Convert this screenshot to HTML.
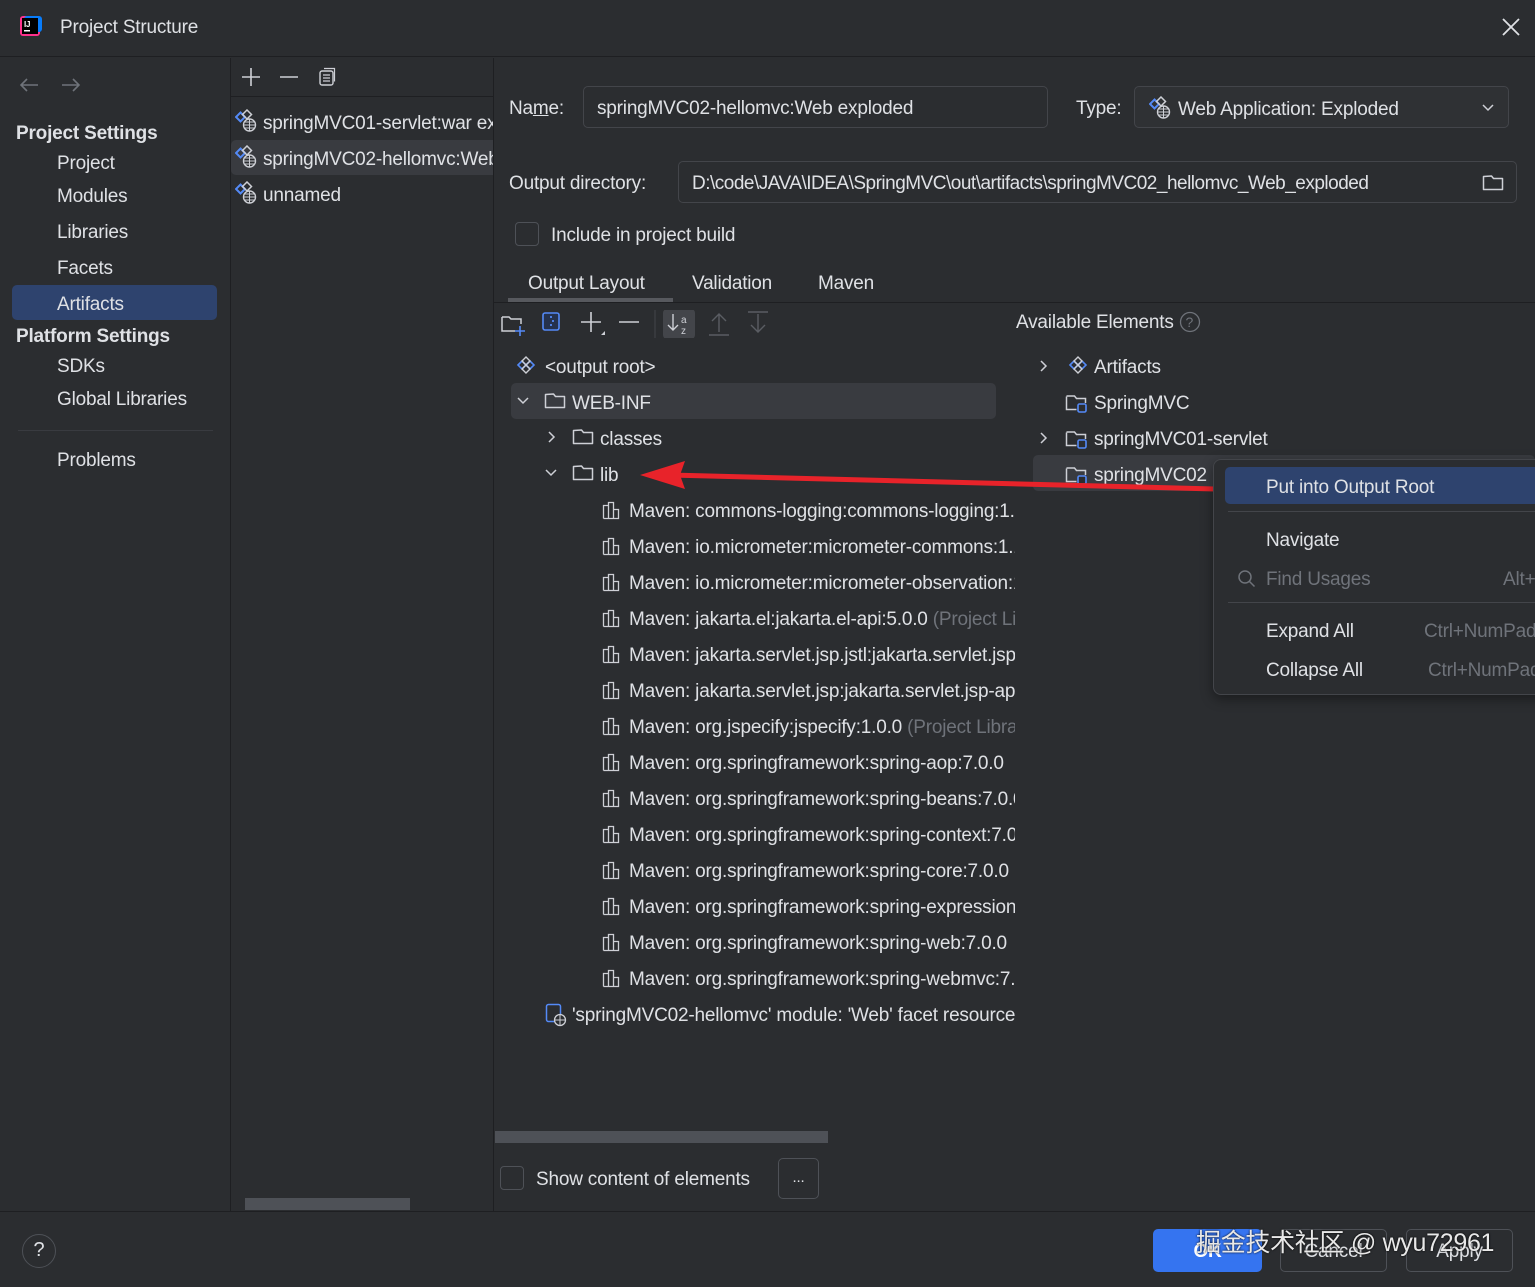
<!DOCTYPE html>
<html><head><meta charset="utf-8">
<style>
*{box-sizing:border-box;margin:0;padding:0}
body{width:1535px;height:1287px;background:#2b2d30;color:#dfe1e5;font-family:"Liberation Sans","Noto Sans CJK SC",sans-serif;font-size:19px;position:relative;overflow:hidden;letter-spacing:-0.2px}
.a{position:absolute;white-space:nowrap}
.t{line-height:36px;height:36px;margin-top:2px}
.sel{background:#2e436e}
.g{color:#6f737a}
.clip{overflow:hidden}
svg{position:absolute}
</style></head><body>
<svg width="0" height="0" style="position:absolute">
<defs>
<g id="art"><path d="M5.5 3.5l4.5 4.5-4.5 4.5L1 8z" fill="none" stroke="#548af7" stroke-width="2"/><path d="M12 1l4.5 4.5-4.5 4.5-4.5-4.5z" fill="none" stroke="#ced0d6" stroke-width="1.5"/><circle cx="14.5" cy="16" r="6" fill="#2b2d30" stroke="#ced0d6" stroke-width="1.4"/><path d="M8.5 16h12M14.5 10v12M10 13h9M10 19h9" stroke="#ced0d6" stroke-width="1"/></g>
<g id="root"><path d="M5 10l4-4 4 4-4 4z" fill="none" stroke="#548af7" stroke-width="1.6"/><path d="M13 10l4-4 4 4-4 4z" fill="none" stroke="#548af7" stroke-width="1.6"/><path d="M9 6l4-4 4 4-4 4z" fill="none" stroke="#ced0d6" stroke-width="1.4"/><path d="M9 14l4-4 4 4-4 4z" fill="none" stroke="#ced0d6" stroke-width="1.4"/></g>
<g id="fold"><path d="M1.5 4.5v13h19v-11h-9l-2-2.5z" fill="none" stroke="#ced0d6" stroke-width="1.5" stroke-linejoin="round"/></g>
<g id="mfold"><path d="M1.5 4.5v13h10M20.5 11v-4.5h-9l-2-2.5h-8" fill="none" stroke="#ced0d6" stroke-width="1.5"/><rect x="13" y="12" width="8" height="8" rx="1.5" fill="#2b2d30" stroke="#548af7" stroke-width="1.6"/></g>
<g id="lib"><path d="M1.5 18.5v-13h5v13M6.5 18.5v-16h5v16M11.5 18.5v-9h5v9h-15" fill="none" stroke="#ced0d6" stroke-width="1.3"/></g>
<g id="chd"><path d="M1 1l5 5 5-5" fill="none" stroke="#ced0d6" stroke-width="1.5"/></g>
<g id="chr"><path d="M1 1l5 5-5 5" fill="none" stroke="#ced0d6" stroke-width="1.5"/></g>
</defs></svg>

<!-- title bar -->
<div class="a" style="left:0;top:0;width:1535px;height:57px;border-bottom:1px solid #1e1f22"></div>
<svg style="left:18px;top:15px" width="24" height="24"><rect x="2" y="1" width="20" height="20" rx="3" fill="#ff318c"/><rect x="6" y="1" width="18" height="16" rx="3" fill="#087cfa"/><rect x="4" y="3" width="16" height="16" fill="#000"/><text x="6" y="12" font-size="8" fill="#fff" font-family="Liberation Sans" font-weight="bold">IJ</text><rect x="6" y="15" width="6" height="1.5" fill="#fff"/></svg>
<div class="a" style="left:60px;top:15px;font-size:19px;line-height:26px">Project Structure</div>
<svg style="left:1501px;top:17px" width="20" height="20"><path d="M2 2l16 16M18 2L2 18" stroke="#dfe1e5" stroke-width="1.8"/></svg>

<!-- left sidebar -->
<div class="a" style="left:230px;top:58px;width:1px;height:1154px;background:#1e1f22"></div>
<svg style="left:20px;top:76px" width="70" height="18"><path d="M1 9h17M7 3L1 9l6 6" fill="none" stroke="#6f737a" stroke-width="1.6"/><path d="M42 9h17M53 3l6 6-6 6" fill="none" stroke="#6f737a" stroke-width="1.6"/></svg>
<div class="a t" style="left:16px;top:114px;font-weight:bold">Project Settings</div>
<div class="a t" style="left:57px;top:144px">Project</div>
<div class="a t" style="left:57px;top:177px">Modules</div>
<div class="a t" style="left:57px;top:213px">Libraries</div>
<div class="a t" style="left:57px;top:249px">Facets</div>
<div class="a sel" style="left:12px;top:285px;width:205px;height:35px;border-radius:5px"></div>
<div class="a t" style="left:57px;top:285px">Artifacts</div>
<div class="a t" style="left:16px;top:317px;font-weight:bold">Platform Settings</div>
<div class="a t" style="left:57px;top:347px">SDKs</div>
<div class="a t" style="left:57px;top:380px">Global Libraries</div>
<div class="a" style="left:18px;top:430px;width:195px;height:1px;background:#393b40"></div>
<div class="a t" style="left:57px;top:441px">Problems</div>

<!-- artifacts list -->
<div class="a" style="left:493px;top:58px;width:1px;height:1154px;background:#1e1f22"></div>
<div class="a" style="left:231px;top:96px;width:262px;height:1px;background:#1e1f22"></div>
<svg style="left:240px;top:67px" width="110" height="22"><path d="M2 10h18M11 1v18" stroke="#ced0d6" stroke-width="1.6"/><path d="M40 10h18" stroke="#ced0d6" stroke-width="1.6"/><rect x="80" y="4" width="13" height="14" rx="2" fill="none" stroke="#ced0d6" stroke-width="1.4"/><path d="M84 1.5h10.5v13M83 8h7M83 11h7M83 14h7" fill="none" stroke="#ced0d6" stroke-width="1.2"/></svg>
<div class="a" style="left:231px;top:140px;width:262px;height:35px;background:#393b40;border-radius:5px 0 0 5px"></div>
<svg style="left:235px;top:109px" width="24" height="24"><use href="#art"/></svg>
<svg style="left:235px;top:145px" width="24" height="24"><use href="#art"/></svg>
<svg style="left:235px;top:181px" width="24" height="24"><use href="#art"/></svg>
<div class="a t clip" style="left:263px;top:104px;width:230px">springMVC01-servlet:war exploded</div>
<div class="a t clip" style="left:263px;top:140px;width:230px">springMVC02-hellomvc:Web exploded</div>
<div class="a t" style="left:263px;top:176px">unnamed</div>
<div class="a" style="left:245px;top:1198px;width:165px;height:12px;background:#4e5157"></div>

<!-- right top form -->
<div class="a t" style="left:509px;top:89px">Na<u>m</u>e:</div>
<div class="a" style="left:583px;top:86px;width:465px;height:42px;border:1px solid #43454a;border-radius:5px"></div>
<div class="a t" style="left:597px;top:89px">springMVC02-hellomvc:Web exploded</div>
<div class="a t" style="left:1076px;top:89px">Type:</div>
<div class="a" style="left:1134px;top:86px;width:375px;height:42px;border:1px solid #43454a;border-radius:5px;background:#2f3134"></div>
<svg style="left:1149px;top:96px" width="24" height="24"><use href="#art"/></svg>
<div class="a t" style="left:1178px;top:90px">Web Application: Exploded</div>
<svg style="left:1482px;top:104px" width="14" height="10"><use href="#chd"/></svg>
<div class="a t" style="left:509px;top:164px">Output directory:</div>
<div class="a" style="left:678px;top:161px;width:839px;height:42px;border:1px solid #43454a;border-radius:5px"></div>
<div class="a t" style="left:692px;top:164px;letter-spacing:-0.5px">D:\code\JAVA\IDEA\SpringMVC\out\artifacts\springMVC02_hellomvc_Web_exploded</div>
<svg style="left:1482px;top:172px" width="24" height="22"><use href="#fold"/></svg>
<div class="a" style="left:515px;top:222px;width:24px;height:24px;border:1.5px solid #4e5157;border-radius:4px"></div>
<div class="a t" style="left:551px;top:216px">Include in project build</div>
<div class="a t" style="left:528px;top:264px">Output Layout</div>
<div class="a t" style="left:692px;top:264px">Validation</div>
<div class="a t" style="left:818px;top:264px">Maven</div>
<div class="a" style="left:508px;top:298px;width:165px;height:4px;background:#57595e"></div>
<div class="a" style="left:494px;top:302px;width:1041px;height:1px;background:#1e1f22"></div>

<!-- toolbar -->
<svg style="left:500px;top:310px" width="300" height="28">
<path d="M2 7v14h13M2 7h7l2 2h10v5" fill="none" stroke="#ced0d6" stroke-width="1.5"/><path d="M20 16v10M15 21h10" stroke="#548af7" stroke-width="1.6"/>
<rect x="43" y="3" width="16" height="17" rx="2" fill="#25324d" stroke="#548af7" stroke-width="1.6"/><path d="M50 7h2M52 11h2M50 15h2" stroke="#548af7" stroke-width="1.8"/>
<path d="M81 12h20M91 2v20" stroke="#ced0d6" stroke-width="1.6"/><path d="M105 21l-4 4h4z" fill="#ced0d6"/>
<path d="M119 12h20" stroke="#ced0d6" stroke-width="1.6"/>
<path d="M155 0v28" stroke="#43454a" stroke-width="1"/>
<rect x="163" y="-1" width="32" height="30" rx="4" fill="#43454a"/><path d="M173 4v16M168 15l5 5 5-5" fill="none" stroke="#ced0d6" stroke-width="1.4"/><text x="181" y="13" font-size="10" fill="#ced0d6" font-family="Liberation Sans">a</text><text x="181" y="24" font-size="10" fill="#ced0d6" font-family="Liberation Sans">z</text>
<path d="M219 22V4M212 11l7-7 7 7M209 25h20" fill="none" stroke="#5a5d63" stroke-width="1.4"/>
<path d="M258 4v18M251 15l7 7 7-7M248 2h20" fill="none" stroke="#5a5d63" stroke-width="1.4"/>
</svg>
<div class="a t" style="left:1016px;top:303px">Available Elements</div>
<svg style="left:1179px;top:311px" width="22" height="22"><circle cx="11" cy="11" r="9.5" fill="none" stroke="#6f737a" stroke-width="1.3"/><text x="6.5" y="16" font-size="14" fill="#6f737a" font-family="Liberation Sans">?</text></svg>

<!-- layout tree -->
<div class="a" style="left:511px;top:383px;width:485px;height:36px;background:#393b40;border-radius:5px"></div>
<svg style="left:513px;top:355px" width="24" height="24"><use href="#root"/></svg>
<div class="a t" style="left:545px;top:348px">&lt;output root&gt;</div>
<svg style="left:517px;top:397px" width="14" height="10"><use href="#chd"/></svg>
<svg style="left:544px;top:390px" width="24" height="22"><use href="#fold"/></svg>
<div class="a t" style="left:572px;top:384px">WEB-INF</div>
<svg style="left:548px;top:431px" width="10" height="14"><use href="#chr"/></svg>
<svg style="left:572px;top:426px" width="24" height="22"><use href="#fold"/></svg>
<div class="a t" style="left:600px;top:420px">classes</div>
<svg style="left:545px;top:469px" width="14" height="10"><use href="#chd"/></svg>
<svg style="left:572px;top:462px" width="24" height="22"><use href="#fold"/></svg>
<div class="a t" style="left:600px;top:456px">lib</div>

<div class="a clip" style="left:600px;top:492px;width:415px;height:506px">
<div style="position:relative">
<svg style="left:2px;top:8px" width="22" height="20"><use href="#lib"/></svg><div class="a t" style="left:29px;top:0">Maven: commons-logging:commons-logging:1.3.5</div>
<svg style="left:2px;top:44px" width="22" height="20"><use href="#lib"/></svg><div class="a t" style="left:29px;top:36px">Maven: io.micrometer:micrometer-commons:1.15.0</div>
<svg style="left:2px;top:80px" width="22" height="20"><use href="#lib"/></svg><div class="a t" style="left:29px;top:72px">Maven: io.micrometer:micrometer-observation:1.15</div>
<svg style="left:2px;top:116px" width="22" height="20"><use href="#lib"/></svg><div class="a t" style="left:29px;top:108px">Maven: jakarta.el:jakarta.el-api:5.0.0 <span class="g">(Project Library)</span></div>
<svg style="left:2px;top:152px" width="22" height="20"><use href="#lib"/></svg><div class="a t" style="left:29px;top:144px">Maven: jakarta.servlet.jsp.jstl:jakarta.servlet.jsp</div>
<svg style="left:2px;top:188px" width="22" height="20"><use href="#lib"/></svg><div class="a t" style="left:29px;top:180px">Maven: jakarta.servlet.jsp:jakarta.servlet.jsp-api</div>
<svg style="left:2px;top:224px" width="22" height="20"><use href="#lib"/></svg><div class="a t" style="left:29px;top:216px">Maven: org.jspecify:jspecify:1.0.0 <span class="g">(Project Library)</span></div>
<svg style="left:2px;top:260px" width="22" height="20"><use href="#lib"/></svg><div class="a t" style="left:29px;top:252px">Maven: org.springframework:spring-aop:7.0.0</div>
<svg style="left:2px;top:296px" width="22" height="20"><use href="#lib"/></svg><div class="a t" style="left:29px;top:288px">Maven: org.springframework:spring-beans:7.0.0</div>
<svg style="left:2px;top:332px" width="22" height="20"><use href="#lib"/></svg><div class="a t" style="left:29px;top:324px">Maven: org.springframework:spring-context:7.0</div>
<svg style="left:2px;top:368px" width="22" height="20"><use href="#lib"/></svg><div class="a t" style="left:29px;top:360px">Maven: org.springframework:spring-core:7.0.0</div>
<svg style="left:2px;top:404px" width="22" height="20"><use href="#lib"/></svg><div class="a t" style="left:29px;top:396px">Maven: org.springframework:spring-expression</div>
<svg style="left:2px;top:440px" width="22" height="20"><use href="#lib"/></svg><div class="a t" style="left:29px;top:432px">Maven: org.springframework:spring-web:7.0.0</div>
<svg style="left:2px;top:476px" width="22" height="20"><use href="#lib"/></svg><div class="a t" style="left:29px;top:468px">Maven: org.springframework:spring-webmvc:7.0</div>
</div></div>
<svg style="left:545px;top:1003px" width="24" height="24"><rect x="1.5" y="1.5" width="14" height="17" rx="2" fill="none" stroke="#548af7" stroke-width="1.5"/><circle cx="15" cy="17" r="5.5" fill="#2b2d30" stroke="#ced0d6" stroke-width="1.3"/><path d="M9.5 17h11M15 11.5v11" stroke="#ced0d6" stroke-width="1"/></svg>
<div class="a t clip" style="left:572px;top:996px;width:443px">'springMVC02-hellomvc' module: 'Web' facet resources</div>

<div class="a" style="left:495px;top:1131px;width:333px;height:12px;background:#4e5157"></div>
<div class="a" style="left:500px;top:1166px;width:24px;height:24px;border:1.5px solid #4e5157;border-radius:4px"></div>
<div class="a t" style="left:536px;top:1160px">Show content of elements</div>
<div class="a" style="left:778px;top:1158px;width:41px;height:41px;border:1.5px solid #4e5157;border-radius:5px;text-align:center;line-height:38px;font-size:15px">...</div>

<!-- available elements -->
<svg style="left:1040px;top:360px" width="10" height="14"><use href="#chr"/></svg>
<svg style="left:1065px;top:355px" width="24" height="24"><use href="#root"/></svg>
<div class="a t" style="left:1094px;top:348px">Artifacts</div>
<svg style="left:1065px;top:392px" width="24" height="24"><use href="#mfold"/></svg>
<div class="a t" style="left:1094px;top:384px">SpringMVC</div>
<svg style="left:1040px;top:432px" width="10" height="14"><use href="#chr"/></svg>
<svg style="left:1065px;top:428px" width="24" height="24"><use href="#mfold"/></svg>
<div class="a t" style="left:1094px;top:420px">springMVC01-servlet</div>
<div class="a" style="left:1033px;top:455px;width:502px;height:36px;background:#393b40;border-radius:5px"></div>
<svg style="left:1065px;top:464px" width="24" height="24"><use href="#mfold"/></svg>
<div class="a t" style="left:1094px;top:456px">springMVC02</div>

<!-- red arrow -->
<svg style="left:630px;top:455px" width="600" height="45"><path d="M40 20L585 34" stroke="#e8232a" stroke-width="5"/><path d="M10 20L55 6L50 20L55 34z" fill="#e8232a"/></svg>

<!-- context menu -->
<div class="a" style="left:1213px;top:459px;width:340px;height:236px;background:#2b2d30;border:1px solid #43454a;border-radius:8px;box-shadow:0 4px 12px rgba(0,0,0,.4)"></div>
<div class="a sel" style="left:1225px;top:467px;width:320px;height:37px;border-radius:5px"></div>
<div class="a t" style="left:1266px;top:468px">Put into Output Root</div>
<div class="a" style="left:1228px;top:511px;width:310px;height:1px;background:#43454a"></div>
<div class="a t" style="left:1266px;top:521px">Navigate</div>
<svg style="left:1237px;top:569px" width="20" height="20"><circle cx="8" cy="8" r="6" fill="none" stroke="#6f737a" stroke-width="1.5"/><path d="M12.5 12.5l5 5" stroke="#6f737a" stroke-width="1.5"/></svg>
<div class="a t g" style="left:1266px;top:560px">Find Usages</div>
<div class="a t g" style="left:1503px;top:560px">Alt+F7</div>
<div class="a" style="left:1228px;top:602px;width:310px;height:1px;background:#43454a"></div>
<div class="a t" style="left:1266px;top:612px">Expand All</div>
<div class="a t g" style="left:1424px;top:612px">Ctrl+NumPad +</div>
<div class="a t" style="left:1266px;top:651px">Collapse All</div>
<div class="a t g" style="left:1428px;top:651px">Ctrl+NumPad -</div>

<!-- footer -->
<div class="a" style="left:0;top:1211px;width:1535px;height:1px;background:#1e1f22"></div>
<div class="a" style="left:22px;top:1234px;width:34px;height:34px;border:1.5px solid #4e5157;border-radius:50%;text-align:center;line-height:31px;font-size:20px">?</div>
<div class="a" style="left:1153px;top:1229px;width:109px;height:43px;background:#3574f0;border-radius:5px;text-align:center;line-height:45px;font-weight:bold;color:#fff">OK</div>
<div class="a" style="left:1280px;top:1229px;width:107px;height:43px;border:1.5px solid #4e5157;border-radius:5px;text-align:center;line-height:44px">Cancel</div>
<div class="a" style="left:1406px;top:1229px;width:107px;height:43px;border:1.5px solid #4e5157;border-radius:5px;text-align:center;line-height:44px">Apply</div>
<div class="a" style="left:1196px;top:1223px;font-size:25px;color:#e8e8e8;text-shadow:0 0 2px #000;font-family:'Liberation Sans','Noto Sans CJK SC',sans-serif;letter-spacing:-0.3px">掘金技术社区 @ wyu72961</div>
</body></html>
